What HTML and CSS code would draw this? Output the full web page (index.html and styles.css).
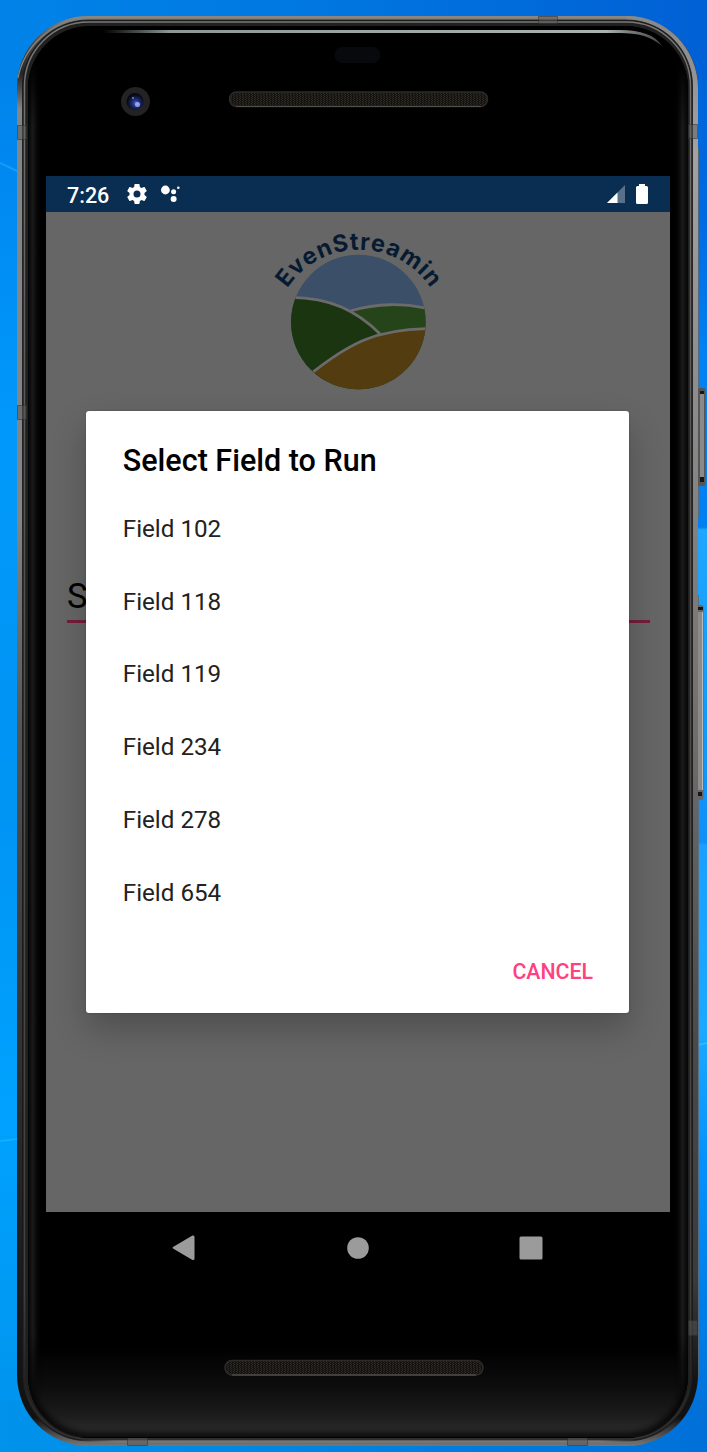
FILE: index.html
```html
<!DOCTYPE html>
<html lang="en">
<head>
<meta charset="utf-8">
<title>EvenStreamin</title>
<link rel="stylesheet" href="styles.css">
</head>
<body>
<div class="desktop">
  <svg class="backdrop" width="707" height="1452" viewBox="0 0 707 1452" aria-hidden="true">
    <defs>
      <linearGradient id="wallLeft" x1="0" y1="0" x2="0" y2="1">
        <stop offset="0" stop-color="#0080e7"/><stop offset=".11" stop-color="#0088f0"/><stop offset=".3" stop-color="#0099fb"/><stop offset=".55" stop-color="#0094f3"/><stop offset=".77" stop-color="#00a2ff"/><stop offset="1" stop-color="#0093eb"/>
      </linearGradient>
      <linearGradient id="wallRight" x1="0" y1="0" x2="0" y2="1">
        <stop offset="0" stop-color="#0060d5"/><stop offset=".15" stop-color="#006be0"/><stop offset=".25" stop-color="#0482f2"/><stop offset=".363" stop-color="#0280f0"/><stop offset=".365" stop-color="#20a6ff"/><stop offset=".5" stop-color="#1199fb"/><stop offset=".58" stop-color="#128ff7"/><stop offset=".582" stop-color="#1c9fff"/><stop offset=".71" stop-color="#1ba8ff"/><stop offset=".8" stop-color="#0890fa"/><stop offset=".89" stop-color="#007fe9"/><stop offset="1" stop-color="#0070d8"/>
      </linearGradient>
      <linearGradient id="wallTop"><stop offset="0" stop-color="#0083e8"/><stop offset=".4" stop-color="#0079e2"/><stop offset="1" stop-color="#0060d5"/></linearGradient>
      <linearGradient id="wallBottom"><stop offset="0" stop-color="#0093eb"/><stop offset=".5" stop-color="#0083e2"/><stop offset="1" stop-color="#0070d8"/></linearGradient>
      <linearGradient id="metal" x1="0" y1="0" x2="0" y2="1">
        <stop offset="0" stop-color="#888784"/><stop offset=".015" stop-color="#555"/><stop offset=".04" stop-color="#252525"/><stop offset=".065" stop-color="#858585"/><stop offset=".35" stop-color="#858585"/><stop offset=".5" stop-color="#555"/><stop offset=".7" stop-color="#353535"/><stop offset=".93" stop-color="#151515"/><stop offset=".98" stop-color="#111"/><stop offset="1" stop-color="#777"/>
      </linearGradient>
      <linearGradient id="metalRight" x1="0" y1="0" x2="0" y2="1">
        <stop offset="0" stop-color="#888"/><stop offset=".1" stop-color="#a2a2a2"/><stop offset=".3" stop-color="#8c8a88"/><stop offset=".5" stop-color="#757270"/><stop offset=".75" stop-color="#4a4a4a"/><stop offset=".93" stop-color="#3a3a3a"/><stop offset="1" stop-color="#151515"/>
      </linearGradient>
      <linearGradient id="innerRim" x1="0" y1="0" x2="0" y2="1"><stop offset="0" stop-color="#777"/><stop offset=".3" stop-color="#555"/><stop offset=".9" stop-color="#404040"/><stop offset=".96" stop-color="#222"/><stop offset="1" stop-color="#333"/></linearGradient>
      <linearGradient id="lowerLip"><stop offset="0" stop-color="#777" stop-opacity="0"/><stop offset=".08" stop-color="#777"/><stop offset=".92" stop-color="#777"/><stop offset="1" stop-color="#777" stop-opacity="0"/></linearGradient>
      <linearGradient id="chin" x1="0" y1="0" x2="0" y2="1"><stop offset="0" stop-color="#000"/><stop offset=".45" stop-color="#0d0d0d"/><stop offset=".75" stop-color="#1b1b1b"/><stop offset="1" stop-color="#303030"/></linearGradient>
      <linearGradient id="edgeL"><stop offset="0" stop-color="#050505"/><stop offset=".35" stop-color="#1b1b1b"/><stop offset="1" stop-color="#000" stop-opacity="0"/></linearGradient>
      <linearGradient id="edgeR"><stop offset="0" stop-color="#000" stop-opacity="0"/><stop offset=".6" stop-color="#1b1b1b"/><stop offset="1" stop-color="#050505"/></linearGradient>
      <linearGradient id="endFade" x1="0" y1="0" x2="0" y2="1"><stop offset="0" stop-color="#000"/><stop offset=".05" stop-color="#fff"/><stop offset=".95" stop-color="#fff"/><stop offset="1" stop-color="#000"/></linearGradient>
      <mask id="edgeMask" maskUnits="userSpaceOnUse" x="0" y="60" width="707" height="1340"><path d="M0 60H707V1400H0Z" fill="url(#endFade)"/></mask>
      <linearGradient id="shine"><stop offset="0" stop-color="#8c9898" stop-opacity="0"/><stop offset=".12" stop-color="#8c9898"/><stop offset=".9" stop-color="#a9b3b2"/><stop offset="1" stop-color="#777" stop-opacity=".6"/></linearGradient>
      <radialGradient id="lens" cx=".55" cy=".6"><stop offset="0" stop-color="#5568cc"/><stop offset=".4" stop-color="#222f7c"/><stop offset="1" stop-color="#070914"/></radialGradient>
      <pattern id="mesh" width="3" height="2" patternUnits="userSpaceOnUse"><path d="M0 0h3v2H0z" fill="#15130f"/><path d="M0 0h1v1H0zM2 1h1v1H2z" fill="#2f2c26"/></pattern>
      <clipPath id="glassClip"><path d="M89 26H626A62 62 0 0 1 688 88V1376A62 62 0 0 1 626 1438H90A62 62 0 0 1 28 1376V88A62 62 0 0 1 89 26Z"/></clipPath>
      <filter id="soft" x="-20%" y="-20%" width="140%" height="140%"><feGaussianBlur stdDeviation="3.5"/></filter>
    </defs>

    <path d="M0 0H350V1452H0Z" fill="url(#wallLeft)"/>
    <path d="M350 0H707V1452H350Z" fill="url(#wallRight)"/>
    <path d="M0 0H707V80H0Z" fill="url(#wallTop)"/>
    <path d="M0 1400H707V1452H0Z" fill="url(#wallBottom)"/>
    <path d="M0 163L17 171" stroke="#1ca6ff" stroke-width="2" opacity=".7"/>
    <path d="M0 1141L17 1139" stroke="#24b5ff" stroke-width="1.5" opacity=".7"/>
    <path d="M698 1045L707 1043" stroke="#3bc0ff" stroke-width="2" opacity=".7"/>

    <!-- side keys -->
    <path d="M697 148h1.800v370H697zM697 595h1.800v782H697z" fill="#666"/>
    <rect x="697.500" y="388" width="8" height="98" rx="2" fill="#555"/>
    <rect x="700" y="394" width="4" height="83" fill="#8a8a8a"/>
    <path d="M700 391h4v3h-4zM700 477h4v5h-4z" fill="#151515"/>
    <rect x="696" y="605" width="7.500" height="195" rx="2" fill="#666"/>
    <path d="M698 612h4v178h-4z" fill="#8d8b89"/><path d="M702 612h1v178h-1z" fill="#bbb"/>
    <path d="M697 607h6v3h-6zM697 792h5v4h-5z" fill="#161616"/>

    <!-- metal rim -->
    <rect x="17" y="16" width="681" height="1430" rx="71" fill="url(#metal)"/>
    <path d="M626 16A72 72 0 0 1 698 88V1376H690V88A64 64 0 0 0 626 20Z" fill="url(#metalRight)"/>
    <rect x="22.500" y="20" width="670" height="1421" rx="66" fill="#202020" stroke="#171717" stroke-width=".8"/>
    <rect x="24.500" y="22" width="666" height="1417" rx="64" fill="none" stroke="url(#innerRim)" stroke-width="1.500"/>
    <path d="M90 16.700H626M84 17.500C52 21 24 46 18 78" fill="none" stroke="#8b8780" stroke-width="1.200"/>
    <path d="M70 1440.300H646V1442.800H70Z" fill="url(#lowerLip)"/>
    <path d="M17.500 125.500h9v14h-9zM17.500 405.500h9v14h-9zM538.500 16.500h19v7h-19zM688.500 124.500h9v14h-9zM688.500 1320.500h9v15h-9zM127.500 1437.500h20v8h-20zM567.500 1437.500h20v8h-20z" fill="#5a5a5a" fill-opacity=".5" stroke="#2c2c2c" stroke-opacity=".5"/>

    <!-- front glass -->
    <g clip-path="url(#glassClip)">
      <path d="M27 25H689V1440H27Z"/>
      <path d="M27 1346H689V1437H27Z" fill="url(#chin)"/>
      <rect x="27" y="25" width="662" height="1412" rx="63" fill="none" stroke="#000" stroke-width="7" filter="url(#soft)"/>
      <g mask="url(#edgeMask)">
        <path d="M28 60H42V1400H28Z" fill="url(#edgeL)"/>
        <path d="M674 60H688V1400H674Z" fill="url(#edgeR)"/>
      </g>
    </g>
    <path d="M103 30H620C641 30 655 35 662 46C650 36 638 33 620 33H103Z" fill="url(#shine)"/>
    <circle cx="135.500" cy="101.500" r="14.500" fill="#242223"/>
    <circle cx="135" cy="101.500" r="8.500" fill="url(#lens)"/>
    <circle cx="137.500" cy="104.500" r="2.500" fill="#a9b9ff" opacity=".8"/><circle cx="133" cy="98" r="1" fill="#7388d5"/>
    <rect x="334.500" y="47" width="46" height="16" rx="8" fill="#08090d"/>
    <rect x="229.500" y="92" width="258" height="14.500" rx="7" fill="url(#mesh)" stroke="#2c2b2a" stroke-width="1.500"/>
    <path d="M236 106.500H481" stroke="#52504d"/>
    <rect x="225" y="1360.500" width="258" height="14.500" rx="7" fill="url(#mesh)" stroke="#2c2b2a" stroke-width="1.500"/>
    <path d="M232 1375H476" stroke="#5d5d59"/>
  </svg>

  <main class="screen">
    <header class="status">
      <span class="time">7:26</span>
      <svg class="gear" width="20" height="20" viewBox="2 2 20 20"><path d="M19.430 12.980c.04-.32.070-.64.070-.98s-.03-.66-.07-.98l2.110-1.650c.19-.15.240-.42.120-.64l-2-3.460c-.12-.22-.39-.3-.61-.22l-2.490 1c-.52-.4-1.080-.73-1.690-.98l-.38-2.650C14.460 2.180 14.250 2 14 2h-4c-.25 0-.46.180-.49.420l-.38 2.650c-.61.250-1.170.590-1.690.980l-2.490-1c-.23-.09-.49 0-.61.220l-2 3.460c-.13.220-.07.490.12.640l2.110 1.650c-.04.320-.07.650-.07.980s.03.660.07.980l-2.110 1.650c-.19.150-.24.420-.12.640l2 3.460c.12.220.39.300.61.220l2.490-1c.52.400 1.080.730 1.690.980l.38 2.650c.03.240.24.420.49.420h4c.25 0 .46-.18.490-.42l.38-2.650c.61-.25 1.170-.59 1.690-.98l2.490 1c.23.090.49 0 .61-.22l2-3.460c.12-.22.070-.49-.12-.64zM12 15.500A3.500 3.500 0 1 1 12 8.500A3.500 3.500 0 0 1 12 15.500Z"/></svg>
      <svg class="assistant" width="20" height="18" viewBox="0 0 20 18"><circle cx="4.400" cy="5" r="4.400"/><circle cx="12.600" cy="6.800" r="2.500"/><circle cx="12.600" cy="14" r="3"/><circle cx="17.300" cy="2.800" r="1.300"/></svg>
      <svg class="signal" width="18" height="18" viewBox="0 0 18 18"><path d="M0 18L18 0V18Z" opacity=".32"/><path d="M0 18L10.500 7.500V18Z"/></svg>
      <svg class="battery" width="12" height="20" viewBox="0 0 12 20"><path d="M3 0H9V2H10.500Q12 2 12 3.500V18.500Q12 20 10.500 20H1.500Q0 20 0 18.500V3.500Q0 2 1.500 2H3Z"/></svg>
    </header>
    <section class="app">
      <svg class="logo" width="200" height="180" viewBox="260 220 200 180">
        <defs><clipPath id="disc"><circle cx="358.400" cy="322" r="67.300"/></clipPath><path id="arc" d="M287.200 288.500A86 86 0 0 1 432.500 291"/></defs>
        <g clip-path="url(#disc)">
          <path d="M285 250H430V400H285Z" fill="#3b5068"/>
          <path d="M285 297C315 298 333 303 350 310C378 302 403 303 430 308.500V400H285Z" fill="#264419"/>
          <path d="M285 298C330 296 360 313 380 334L320 385L280 390Z" fill="#1b3511"/>
          <path d="M308 376C350 342 377 329 430 329V400H300Z" fill="#533d10"/>
          <g fill="none" stroke="#6b6b6b" stroke-width="2.800">
            <path d="M285 297.500C331 296 359 313 380 334"/>
            <path d="M350 311C378 303 402 303 430 309"/>
            <path d="M308 376C350 342 377 329 430 328.500"/>
          </g>
        </g>
        <text class="brand"><textPath href="#arc" textLength="169.500" lengthAdjust="spacing">EvenStreamin</textPath></text>
      </svg>
      <div class="picker">S</div>
    </section>
    <div class="dialog" role="dialog">
      <h1 class="title">Select Field to Run</h1>
      <ul class="fields">
        <li>Field 102</li><li>Field 118</li><li>Field 119</li><li>Field 234</li><li>Field 278</li><li>Field 654</li>
      </ul>
      <button class="cancel">CANCEL</button>
    </div>
  </main>
  <nav class="nav">
    <svg width="24" height="26" viewBox="0 0 24 26"><path d="M1 12L20.500 .6Q22.500 0 22.500 2V23.500Q22.500 25.500 20.500 25L1 13.500Q0 12.700 1 12Z"/></svg>
    <svg width="22" height="22" viewBox="0 0 22 22"><circle cx="11" cy="11" r="10.800"/></svg>
    <svg width="24" height="24" viewBox="0 0 24 24"><rect x=".5" y=".5" width="23" height="23" rx="1.500"/></svg>
  </nav>
</div>
</body>
</html>
```
FILE: styles.css
```css
* { box-sizing: border-box; }
body { margin: 0; font-family: Roboto, sans-serif; }
.desktop { position: relative; width: 707px; height: 1452px; overflow: hidden; padding: 176px 37px 0 46px; }
.backdrop { position: absolute; left: 0; top: 0; z-index: -1; }
.screen { position: relative; width: 624px; height: 1036px; background: #666; overflow: hidden; }
.status { display: flex; align-items: center; height: 36px; padding: 0 22px 0 21px; background: #0a2e52; color: #fff; fill: #fff; }
.time { width: 60px; padding-top: 2px; font-size: 21.5px; font-weight: 500; line-height: 25px; }
.assistant { margin-left: 14px; }
.signal { margin-left: auto; }
.battery { margin-left: 11px; }
.app { display: flex; flex-direction: column; padding: 8px 20px 0 21px; }
.logo { margin-left: 193px; }
.brand { font: 700 23.5px Inter, sans-serif; fill: #061b31; }
.picker { height: 49px; margin-top: 174px; border-bottom: 3px solid #741d3c; font-size: 34.5px; line-height: 45px; color: #000; }
.dialog { position: absolute; left: 40.3px; top: 235px; width: 543.2px; height: 602.4px; padding: 29px 36.5px; border-radius: 3px; background: #fff; box-shadow: 0 16px 34px rgba(0,0,0,.24), 0 0 2px rgba(0,0,0,.25); display: flex; flex-direction: column; }
.title { margin: 0; font-size: 30.5px; font-weight: 500; line-height: 41px; color: #000; }
.fields { list-style: none; margin: 11.9px 0 0; padding: 0; }
.fields li { height: 72.8px; font-size: 24.2px; line-height: 72.8px; color: #222; }
.cancel { align-self: flex-end; margin: 28.7px 0 0; padding: 0; border: 0; background: none; font: 500 21.3px/28px Roboto, sans-serif; color: #ff4081; }
.nav { display: flex; align-items: center; justify-content: space-between; height: 72px; padding: 0 127px 0 126px; fill: #9b9b9b; }
```
